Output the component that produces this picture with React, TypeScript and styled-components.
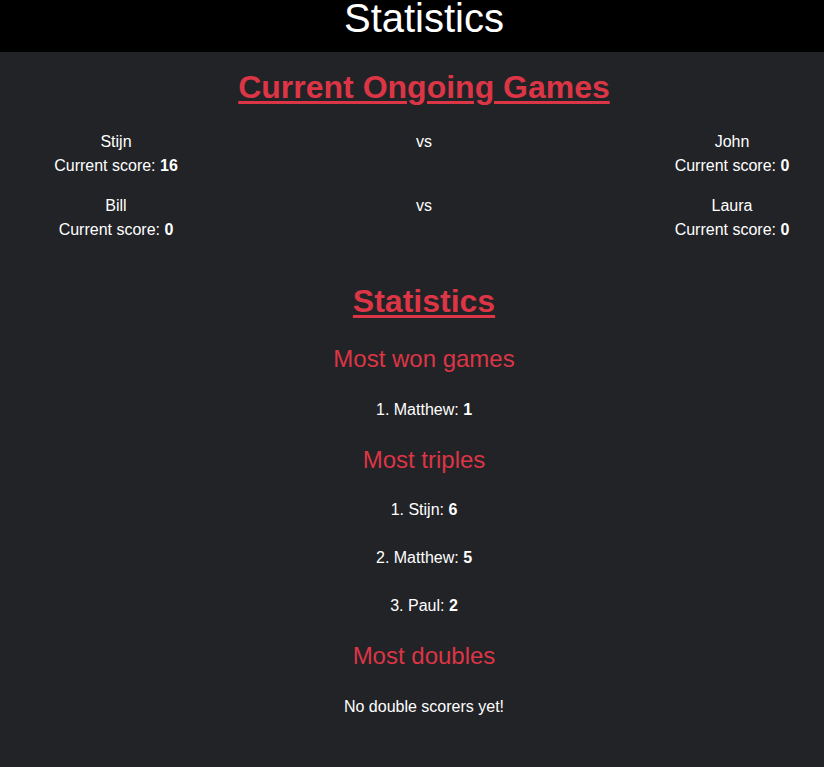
import React from "react";
import styled, { createGlobalStyle } from "styled-components";

const GlobalStyle = createGlobalStyle`
  html, body {
    margin: 0;
    padding: 0;
    background: #222327;
    overflow-x: hidden;
  }
  body {
    color: #ffffff;
    font-family: "Liberation Sans", Arial, sans-serif;
    font-size: 16px;
    line-height: 24px;
    min-height: 767px;
  }
`;

const Page = styled.div`
  width: 848px;
  min-height: 767px;
  background: #222327;
`;

const TopBar = styled.header`
  background: #000;
  height: 52px;
  display: flex;
  justify-content: center;
  align-items: flex-start;
`;

const TopTitle = styled.h1`
  margin: 0;
  font-size: 40px;
  font-weight: 400;
  line-height: 37px;
  color: #fff;
`;

const Main = styled.main`
  display: flex;
  flex-direction: column;
  align-items: center;
  padding-top: 16px;
`;

const SectionTitle = styled.h1`
  margin: 0;
  font-size: 32px;
  font-weight: 700;
  line-height: 38.4px;
  color: #dc3545;
  text-decoration: underline;
  text-underline-offset: 3px;
  text-decoration-thickness: 3px;
  text-align: center;
`;

const Games = styled.div`
  margin-top: 24px;
  width: 100%;
  display: flex;
  flex-direction: column;
  gap: 16px;
`;

const GameRow = styled.div`
  display: grid;
  grid-template-columns: 232px 1fr 232px;
  text-align: center;
  line-height: 24px;
`;

const Player = styled.div`
  display: flex;
  flex-direction: column;
`;

const Versus = styled.div``;

const Stats = styled.section`
  margin-top: 40px;
  display: flex;
  flex-direction: column;
  align-items: center;
  gap: 24px;
`;

const SubTitle = styled.h2`
  margin: 0;
  font-size: 24px;
  font-weight: 400;
  line-height: 28.8px;
  color: #dc3545;
`;

const Item = styled.p`
  margin: 0;
  line-height: 24px;
  text-align: center;
`;

const games = [
  { a: "Stijn", as: 16, b: "John", bs: 0 },
  { a: "Bill", as: 0, b: "Laura", bs: 0 },
];

const stats: { title: string; items: [string, number][]; empty?: string }[] = [
  { title: "Most won games", items: [["Matthew", 1]] },
  {
    title: "Most triples",
    items: [
      ["Stijn", 6],
      ["Matthew", 5],
      ["Paul", 2],
    ],
  },
  { title: "Most doubles", items: [], empty: "No double scorers yet!" },
];

export default function App() {
  return (
    <>
      <GlobalStyle />
      <Page>
        <TopBar>
          <TopTitle>Statistics</TopTitle>
        </TopBar>
        <Main>
          <SectionTitle>Current Ongoing Games</SectionTitle>
          <Games>
            {games.map((g) => (
              <GameRow key={g.a}>
                <Player>
                  <span>{g.a}</span>
                  <span>
                    Current score: <b>{g.as}</b>
                  </span>
                </Player>
                <Versus>vs</Versus>
                <Player>
                  <span>{g.b}</span>
                  <span>
                    Current score: <b>{g.bs}</b>
                  </span>
                </Player>
              </GameRow>
            ))}
          </Games>
          <Stats>
            <SectionTitle>Statistics</SectionTitle>
            {stats.map((s) => (
              <React.Fragment key={s.title}>
                <SubTitle>{s.title}</SubTitle>
                {s.items.length === 0 ? (
                  <Item>{s.empty}</Item>
                ) : (
                  s.items.map(([n, v], i) => (
                    <Item key={n}>
                      {i + 1}. {n}: <b>{v}</b>
                    </Item>
                  ))
                )}
              </React.Fragment>
            ))}
          </Stats>
        </Main>
      </Page>
    </>
  );
}
